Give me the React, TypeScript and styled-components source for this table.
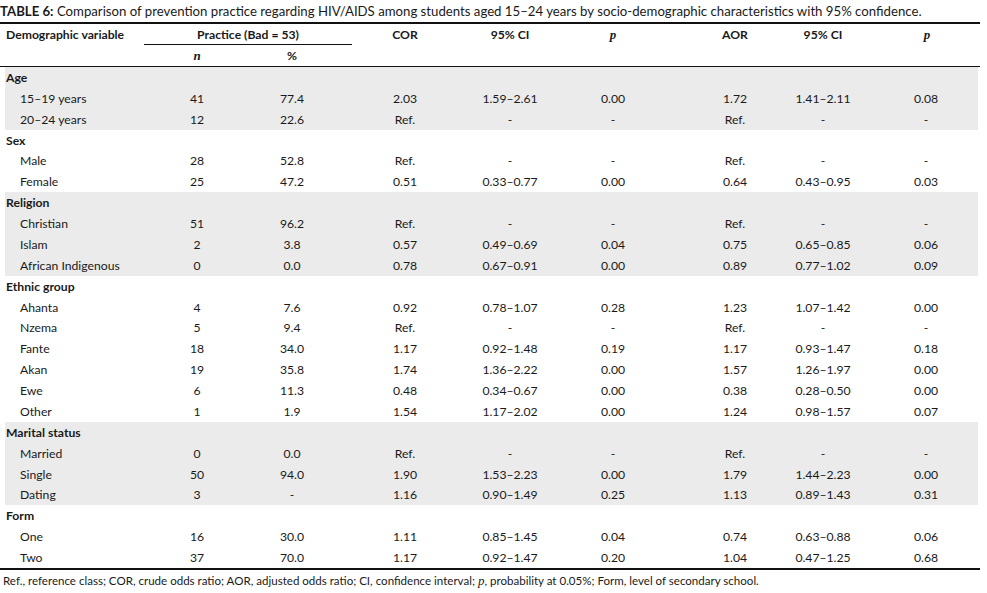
import React from 'react';
import styled, { createGlobalStyle } from 'styled-components';

const GlobalStyle = createGlobalStyle`
  html, body {
    margin: 0;
    padding: 0;
    background: #ffffff;
  }
  body {
    font-family: Lato, "Open Sans", "Liberation Sans", sans-serif;
    color: #1a1a1a;
  }
`;

// column tracks are chosen so every cell centre lands where the reference has it
const COLUMNS = '123px 138px 52px 174px 36px 170px 74px 102px 1fr';
const ROW_HEIGHT = '20.875px';

const Page = styled.div`
  width: 980px;
`;

const Caption = styled.div`
  height: 22px;
  line-height: 22px;
  font-size: 13.2px;
  white-space: nowrap;
  border-bottom: 2px solid #111;
`;

const CaptionLabel = styled.span`
  font-weight: 700;
`;

const HeaderGrid = styled.div`
  display: grid;
  grid-template-columns: ${COLUMNS};
  grid-template-rows: 21px 21px;
  padding-left: 5px;
  border-bottom: 1px solid #111;
  font-size: 12.2px;
  font-weight: 700;
`;

const HeadCell = styled.div<{ $col: number; $row?: number }>`
  grid-column: ${({ $col }) => $col};
  grid-row: ${({ $row }) => $row ?? 1};
  display: flex;
  align-items: center;
  justify-content: center;
  white-space: nowrap;
`;

const HeadLabel = styled(HeadCell)`
  justify-content: flex-start;
  padding-left: 1px;
`;

const PracticeHead = styled.div`
  grid-column: 2 / 4;
  grid-row: 1;
  display: flex;
  align-items: center;
  justify-content: center;
  margin: 0 -34px 0 16px;
  border-bottom: 1px solid #111;
  white-space: nowrap;
`;

const Symbol = styled.span`
  font-family: "Liberation Serif", serif;
  font-style: italic;
  font-size: 13px;
`;

const Group = styled.div<{ $shaded: boolean }>`
  display: grid;
  grid-template-columns: ${COLUMNS};
  grid-auto-rows: ${ROW_HEIGHT};
  margin: 0 2px 0 5px;
  background: ${({ $shaded }) => ($shaded ? '#ebebeb' : 'transparent')};
  font-size: 12.2px;
`;

const GroupTitle = styled.div`
  grid-column: 1 / -1;
  display: flex;
  align-items: center;
  padding-left: 1px;
  font-weight: 700;
`;

const RowLabel = styled.div`
  display: flex;
  align-items: center;
  padding-left: 15px;
  white-space: nowrap;
`;

const Cell = styled.div`
  display: flex;
  align-items: center;
  justify-content: center;
  white-space: nowrap;
`;

const BottomRule = styled.div`
  border-top: 2px solid #111;
`;

const Footnote = styled.div`
  margin-top: 3px;
  padding-left: 3px;
  font-size: 11.55px;
  white-space: nowrap;
`;

type GroupData = { label: string; shaded: boolean; rows: string[][] };

const groups: GroupData[] = [
  {
    label: 'Age',
    shaded: true,
    rows: [
      ['15–19 years', '41', '77.4', '2.03', '1.59–2.61', '0.00', '1.72', '1.41–2.11', '0.08'],
      ['20–24 years', '12', '22.6', 'Ref.', '-', '-', 'Ref.', '-', '-'],
    ],
  },
  {
    label: 'Sex',
    shaded: false,
    rows: [
      ['Male', '28', '52.8', 'Ref.', '-', '-', 'Ref.', '-', '-'],
      ['Female', '25', '47.2', '0.51', '0.33–0.77', '0.00', '0.64', '0.43–0.95', '0.03'],
    ],
  },
  {
    label: 'Religion',
    shaded: true,
    rows: [
      ['Christian', '51', '96.2', 'Ref.', '-', '-', 'Ref.', '-', '-'],
      ['Islam', '2', '3.8', '0.57', '0.49–0.69', '0.04', '0.75', '0.65–0.85', '0.06'],
      ['African Indigenous', '0', '0.0', '0.78', '0.67–0.91', '0.00', '0.89', '0.77–1.02', '0.09'],
    ],
  },
  {
    label: 'Ethnic group',
    shaded: false,
    rows: [
      ['Ahanta', '4', '7.6', '0.92', '0.78–1.07', '0.28', '1.23', '1.07–1.42', '0.00'],
      ['Nzema', '5', '9.4', 'Ref.', '-', '-', 'Ref.', '-', '-'],
      ['Fante', '18', '34.0', '1.17', '0.92–1.48', '0.19', '1.17', '0.93–1.47', '0.18'],
      ['Akan', '19', '35.8', '1.74', '1.36–2.22', '0.00', '1.57', '1.26–1.97', '0.00'],
      ['Ewe', '6', '11.3', '0.48', '0.34–0.67', '0.00', '0.38', '0.28–0.50', '0.00'],
      ['Other', '1', '1.9', '1.54', '1.17–2.02', '0.00', '1.24', '0.98–1.57', '0.07'],
    ],
  },
  {
    label: 'Marital status',
    shaded: true,
    rows: [
      ['Married', '0', '0.0', 'Ref.', '-', '-', 'Ref.', '-', '-'],
      ['Single', '50', '94.0', '1.90', '1.53–2.23', '0.00', '1.79', '1.44–2.23', '0.00'],
      ['Dating', '3', '-', '1.16', '0.90–1.49', '0.25', '1.13', '0.89–1.43', '0.31'],
    ],
  },
  {
    label: 'Form',
    shaded: false,
    rows: [
      ['One', '16', '30.0', '1.11', '0.85–1.45', '0.04', '0.74', '0.63–0.88', '0.06'],
      ['Two', '37', '70.0', '1.17', '0.92–1.47', '0.20', '1.04', '0.47–1.25', '0.68'],
    ],
  },
];

const App: React.FC = () => {
  return (
    <>
      <GlobalStyle />
      <Page>
        <Caption>
          <CaptionLabel>TABLE 6:</CaptionLabel> Comparison of prevention practice regarding HIV/AIDS among
          students aged 15–24 years by socio-demographic characteristics with 95% confidence.
        </Caption>

        <HeaderGrid>
          <HeadLabel $col={1}>Demographic variable</HeadLabel>
          <PracticeHead>Practice (Bad = 53)</PracticeHead>
          <HeadCell $col={4}>COR</HeadCell>
          <HeadCell $col={5}>95% CI</HeadCell>
          <HeadCell $col={6}><Symbol>p</Symbol></HeadCell>
          <HeadCell $col={7}>AOR</HeadCell>
          <HeadCell $col={8}>95% CI</HeadCell>
          <HeadCell $col={9}><Symbol>p</Symbol></HeadCell>
          <HeadCell $col={2} $row={2}><Symbol>n</Symbol></HeadCell>
          <HeadCell $col={3} $row={2}>%</HeadCell>
        </HeaderGrid>

        {groups.map((group) => (
          <Group key={group.label} $shaded={group.shaded}>
            <GroupTitle>{group.label}</GroupTitle>
            {group.rows.map((row) => (
              <React.Fragment key={row[0]}>
                <RowLabel>{row[0]}</RowLabel>
                {row.slice(1).map((value, i) => (
                  <Cell key={i}>{value}</Cell>
                ))}
              </React.Fragment>
            ))}
          </Group>
        ))}

        <BottomRule />
        <Footnote>
          Ref., reference class; COR, crude odds ratio; AOR, adjusted odds ratio; CI, confidence interval;{' '}
          <Symbol>p</Symbol>, probability at 0.05%; Form, level of secondary school.
        </Footnote>
      </Page>
    </>
  );
};

export default App;
